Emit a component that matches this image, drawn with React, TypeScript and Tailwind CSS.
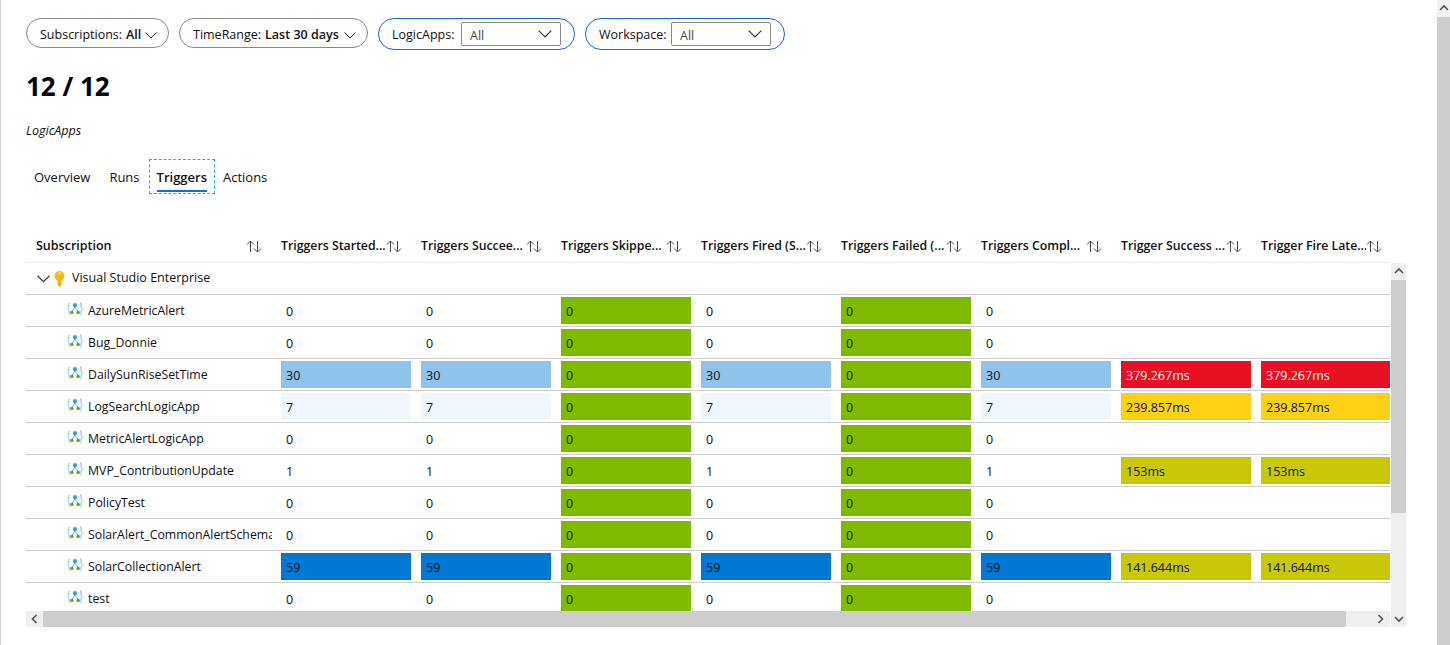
import React from "react";

const GREEN = "bg-[#7fba00]";
const PALE = "bg-[#eff6fc]";
const MID = "bg-[#8fc3ec]";
const BLUE = "bg-[#0078d4]";
const RED = "bg-[#e81123] text-white";
const YEL = "bg-[#fcd116]";
const OLV = "bg-[#c8c809]";

type C = { v: string; c?: string };
const z = (v: string, c?: string): C => ({ v, c });

function row(n: string, v: string, bg?: string, lat?: string, latBg?: string) {
  return {
    n,
    cells: [z(v, bg), z(v, bg), z("0", GREEN), z(v, bg), z("0", GREEN), z(v, bg), z(lat ?? "", latBg), z(lat ?? "", latBg)],
  };
}

const rows = [
  row("AzureMetricAlert", "0"),
  row("Bug_Donnie", "0"),
  row("DailySunRiseSetTime", "30", MID, "379.267ms", RED),
  row("LogSearchLogicApp", "7", PALE, "239.857ms", YEL),
  row("MetricAlertLogicApp", "0"),
  row("MVP_ContributionUpdate", "1", undefined, "153ms", OLV),
  row("PolicyTest", "0"),
  row("SolarAlert_CommonAlertSchema", "0"),
  row("SolarCollectionAlert", "59", BLUE, "141.644ms", OLV),
  row("test", "0"),
];

const headers = [
  "Triggers Started...",
  "Triggers Succee...",
  "Triggers Skippe...",
  "Triggers Fired (S...",
  "Triggers Failed (...",
  "Triggers Compl...",
  "Trigger Success ...",
  "Trigger Fire Late...",
];

const Chevron = ({ w = 12, sw = 1 }: { w?: number; sw?: number }) => (
  <svg width={w} height={Math.round(w * 0.6)} viewBox="0 0 12 7" fill="none" stroke="#323130" strokeWidth={sw}>
    <path d="M0.5 0.5 L6 6 L11.5 0.5" />
  </svg>
);

const SortArrows = () => (
  <svg width="16" height="13" viewBox="0 0 16 13" fill="none" stroke="#484644" strokeWidth="1" className="shrink-0">
    <path d="M4.5 12 V1.2 M1 4.5 L4.5 1 L8 4.5" />
    <path d="M11.5 1 V11.8 M8 8.5 L11.5 12 L15 8.5" />
  </svg>
);

const Key = () => (
  <svg width="11" height="16" viewBox="0 0 11 16" className="shrink-0">
    <circle cx="5.5" cy="5" r="5" fill="#fbb814" />
    <path d="M3.6 8.5 H7.4 V13.6 L5.5 16 L3.6 13.6 Z" fill="#f5ac0a" />
    <rect x="4" y="1.6" width="3" height="1.6" rx="0.6" fill="#ffe58a" />
  </svg>
);

const LogicIcon = () => (
  <svg width="16" height="14" viewBox="0 0 16 14" fill="none" className="shrink-0">
    <path d="M3 0.8 C1.5 0.8 2 2.5 2 4 C2 5.5 1.8 6.2 0.6 6.8 C1.8 7.4 2 8.2 2 9.5 C2 11 1.5 12.8 3 12.8" stroke="#6fbfe2" />
    <path d="M13 0.8 C14.5 0.8 14 2.5 14 4 C14 5.5 14.2 6.2 15.4 6.8 C14.2 7.4 14 8.2 14 9.5 C14 11 14.5 12.8 13 12.8" stroke="#6fbfe2" />
    <path d="M8 5 L4.8 9.5 M8 5 L11.2 9.5" stroke="#8aa6c4" />
    <rect x="6.2" y="1.2" width="3.6" height="3.8" rx="0.7" fill="#3999c6" />
    <circle cx="4.8" cy="10.4" r="1.7" fill="#5ea800" />
    <circle cx="11.2" cy="10.4" r="1.7" fill="#5ea800" />
  </svg>
);

const Caret = ({ d }: { d: "u" | "d" | "l" | "r" }) => {
  const p = { u: "M1 6 L5 2 L9 6", d: "M1 3 L5 7 L9 3", l: "M6.5 1 L2.5 5 L6.5 9", r: "M3.5 1 L7.5 5 L3.5 9" }[d];
  return (
    <svg width="10" height="10" viewBox="0 0 10 10" fill="none" stroke="#505050" strokeWidth="1.6">
      <path d={p} />
    </svg>
  );
};

const Pill = ({ label, value, w }: { label: string; value: string; w: string }) => (
  <div className={`flex h-[30px] items-center rounded-full border border-[#8a8886] pl-[13px] pr-[11px] pt-[4px] ${w}`}>
    <span>{label}</span>
    <span className="ml-[4px] font-semibold">{value}</span>
    <span className="ml-auto"><Chevron /></span>
  </div>
);

const DropPill = ({ label, w }: { label: string; w: string }) => (
  <div className="flex h-[32px] items-center rounded-full border border-[#1a66d2] pl-[13px] pr-[13px]">
    <span className={`pt-[2px] ${w}`}>{label}</span>
    <div className="flex h-[24px] w-[100px] items-center justify-between rounded-[2px] border border-[#8a8886] pl-[8px] pr-[8px]">
      <span className="pt-[4px] text-[#444]">All</span>
      <Chevron w={14} />
    </div>
  </div>
);

export default function App() {
  return (
    <div className="flex h-[645px] w-[1450px] overflow-hidden bg-white text-[12.5px] text-[#111] [font-family:'Open_Sans','Noto_Sans',sans-serif]">
      <div className="w-[1px] shrink-0 bg-[#cfcfcf]" />
      <main className="flex w-[1436px] shrink-0 flex-col pl-[25px] pt-[18px]">
        <div className="flex items-start gap-[10px]">
          <Pill label="Subscriptions:" value="All" w="w-[143px]" />
          <Pill label="TimeRange:" value="Last 30 days" w="w-[189px]" />
          <DropPill label="LogicApps:" w="w-[69px]" />
          <DropPill label="Workspace:" w="w-[72px]" />
        </div>
        <h1 className="mt-[17px] h-[38px] text-[26px] font-bold leading-[38px] text-black">12 / 12</h1>
        <div className="mt-[18px] text-[12.5px] italic leading-[16px]">LogicApps</div>
        <nav className="mt-[20px] flex h-[35px] items-stretch pl-[8px] text-[13px]">
          <span className="mr-[19px] pt-[9px]">Overview</span>
          <span className="mr-[9px] pt-[9px]">Runs</span>
          <span className="relative border border-dashed border-[#18b4f0] px-[7px] pt-[8px] font-semibold">
            Triggers
            <span className="absolute bottom-[1px] left-[7px] right-[7px] h-[2px] bg-[#0078d4]" />
          </span>
          <span className="ml-[8px] pt-[9px]">Actions</span>
        </nav>
        <div className="mt-[36px] flex h-[33px] w-[1364px] items-center overflow-hidden border-b border-[#eaeaea] font-semibold">
          <div className="flex w-[255px] shrink-0 items-center justify-between pl-[10px] pr-[19px]">
            <span>Subscription</span>
            <SortArrows />
          </div>
          {headers.map((h) => (
            <div key={h} className="flex w-[140px] shrink-0 items-center pr-[9px]">
              <span className="w-[105px] shrink-0 overflow-hidden whitespace-nowrap text-[12.3px]">{h}</span>
              <SortArrows />
            </div>
          ))}
        </div>
        <div className="flex h-[348px] w-[1380px]">
          <div className="h-[348px] w-[1364px] shrink-0 overflow-hidden">
            <div className="flex h-[32px] items-center border-b border-[#cdcdcd] pl-[11px]">
              <Chevron w={13} />
              <span className="ml-[4px]"><Key /></span>
              <span className="ml-[7px]">Visual Studio Enterprise</span>
            </div>
            {rows.map((r) => (
              <div key={r.n} className="flex h-[32px] border-b border-[#cdcdcd] pt-[2px]">
                <div className="flex w-[255px] shrink-0 items-start pl-[41px]">
                  <span className="mt-[5px]"><LogicIcon /></span>
                  <span className="ml-[5px] mt-[3px] w-[184px] overflow-hidden whitespace-nowrap text-[12.3px] leading-[22px]">{r.n}</span>
                </div>
                {r.cells.map((c, i) => (
                  <div key={i} className="w-[140px] shrink-0 pr-[10px]">
                    <div className={`flex h-[27px] items-center pl-[5px] pt-[4px] ${c.c ?? ""}`}>{c.v}</div>
                  </div>
                ))}
              </div>
            ))}
          </div>
          <div className="flex h-[364px] w-[16px] shrink-0 flex-col border-l border-white bg-[#efefef]">
            <div className="flex h-[17px] items-center justify-center"><Caret d="u" /></div>
            <div className="h-[233px] bg-[#cdcdcd]" />
            <div className="flex-1" />
            <div className="flex h-[17px] items-center justify-center"><Caret d="d" /></div>
          </div>
        </div>
        <div className="flex h-[16px] w-[1364px] items-center bg-[#efefef]">
          <div className="flex w-[17px] justify-center"><Caret d="l" /></div>
          <div className="h-full w-[1303px] bg-[#cdcdcd]" />
          <div className="flex flex-1 justify-end pr-[5px]"><Caret d="r" /></div>
        </div>
      </main>
      <div className="flex w-[13px] shrink-0 flex-col bg-[#cdcdcd]">
        <div className="flex h-[17px] items-center justify-center bg-[#f1f1f1]"><Caret d="u" /></div>
      </div>
    </div>
  );
}
